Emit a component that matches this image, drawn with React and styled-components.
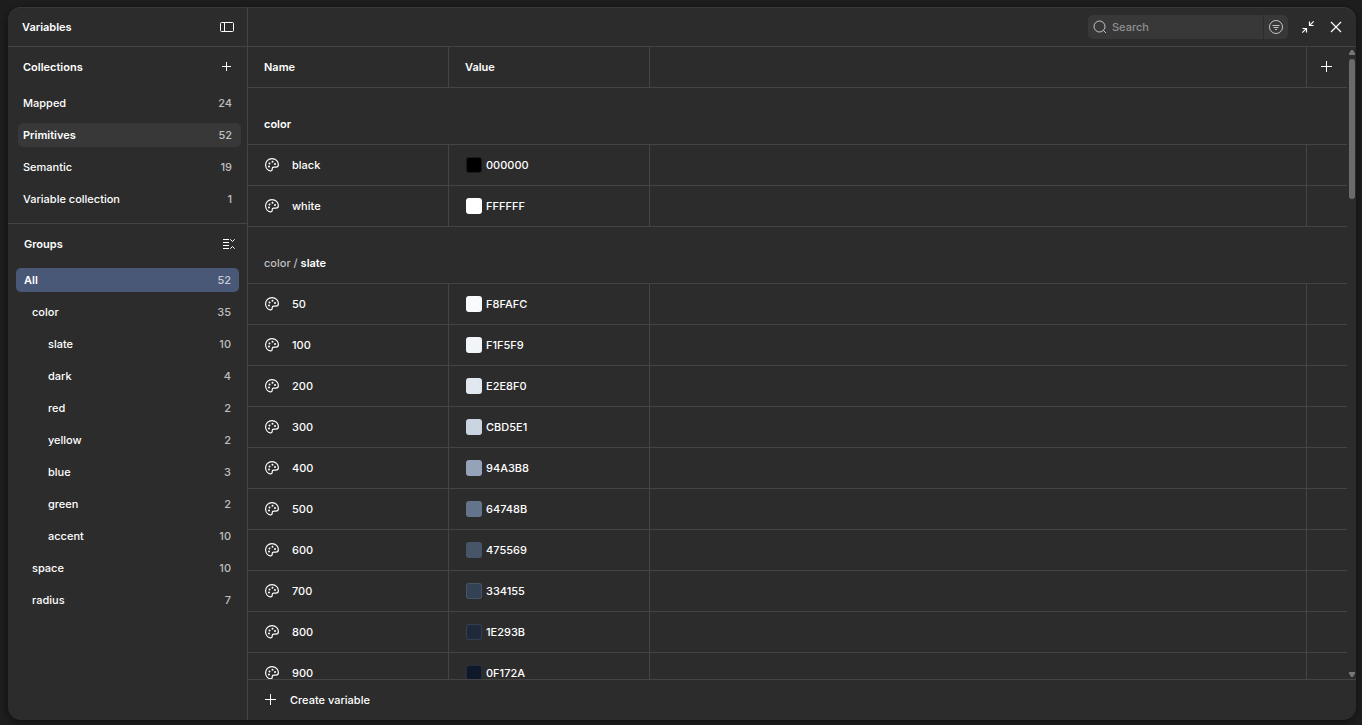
import React, { useState } from 'react';
import styled, { createGlobalStyle } from 'styled-components';

const collections = [
  { name: 'Mapped', count: 24 },
  { name: 'Primitives', count: 52 },
  { name: 'Semantic', count: 19 },
  { name: 'Variable collection', count: 1 },
];

const groups = [
  { name: 'All', count: 52, depth: 0 },
  { name: 'color', count: 35, depth: 1 },
  { name: 'slate', count: 10, depth: 2 },
  { name: 'dark', count: 4, depth: 2 },
  { name: 'red', count: 2, depth: 2 },
  { name: 'yellow', count: 2, depth: 2 },
  { name: 'blue', count: 3, depth: 2 },
  { name: 'green', count: 2, depth: 2 },
  { name: 'accent', count: 10, depth: 2 },
  { name: 'space', count: 10, depth: 1 },
  { name: 'radius', count: 7, depth: 1 },
];

const sections = [
  {
    name: 'color',
    variables: [
      ['black', '000000'],
      ['white', 'FFFFFF'],
    ],
  },
  {
    parent: 'color / ',
    name: 'slate',
    variables: [
      ['50', 'F8FAFC'],
      ['100', 'F1F5F9'],
      ['200', 'E2E8F0'],
      ['300', 'CBD5E1'],
      ['400', '94A3B8'],
      ['500', '64748B'],
      ['600', '475569'],
      ['700', '334155'],
      ['800', '1E293B'],
      ['900', '0F172A'],
    ],
  },
];

// dark swatches get an outline so they stay visible on the panel
const isDark = (hex) => parseInt(hex.slice(0, 2), 16) < 64;

const Icon = ({ children }) => (
  <svg width="16" height="16" viewBox="0 0 16 16" fill="none" stroke="currentColor" aria-hidden="true">
    {children}
  </svg>
);

const PanelIcon = () => (
  <Icon>
    <rect x="1.5" y="3.5" width="13" height="9" rx="1" />
    <path d="M5.5 3.5v9" />
  </Icon>
);

const SmallPlusIcon = () => (
  <Icon>
    <path d="M7.5 3v9M3 7.5h9" />
  </Icon>
);

const PlusIcon = () => (
  <Icon>
    <path d="M7.5 2v11M2 7.5h11" />
  </Icon>
);

const CollapseGroupsIcon = () => (
  <Icon>
    <path d="M4 3.5h6M4 6.5h6M4 9.5h6M4 12.5h6" />
    <path d="M11.300 3.300l2.200 2.200 2.200-2.200M11.300 12.700l2.200-2.200 2.200 2.200" />
  </Icon>
);

const SearchIcon = () => (
  <Icon>
    <circle cx="7.5" cy="7.5" r="5.5" />
    <path d="M11.5 11.5l2.5 2.5" />
  </Icon>
);

const FilterIcon = () => (
  <Icon>
    <circle cx="8" cy="8" r="6.5" />
    <path d="M4.5 6.5h7M5.5 8.5h5M7 10.5h2" />
  </Icon>
);

const MinimizeIcon = () => (
  <Icon>
    <path strokeWidth="1.2" d="M13.700 2.300l-4 4M9.500 2.500v4h4M2.300 13.700l4-4M2.500 9.500h4v4" />
  </Icon>
);

const CloseIcon = () => (
  <Icon>
    <path strokeWidth="1.2" d="M3 3l10 10M13 3L3 13" />
  </Icon>
);

const PaletteIcon = () => (
  <Icon>
    <path
      strokeWidth="1.2"
      d="M8 1.600c-3.600 0-6.400 2.800-6.400 6.200 0 3.200 2.200 5.700 4.700 6 1.200.2 1.900-.5 1.900-1.500v-.7c0-.9.600-1.500 1.500-1.500h2.200c1.500 0 2.500-.9 2.500-2.400C14.400 4.300 11.600 1.600 8 1.600z"
    />
    <g fill="currentColor" stroke="none">
      <circle cx="5" cy="9.500" r="1" />
      <circle cx="5.500" cy="6.500" r="1" />
      <circle cx="8.500" cy="4.800" r="1" />
      <circle cx="11" cy="7" r="1" />
    </g>
  </Icon>
);

const ScrollUpArrow = () => (
  <svg width="6" height="5" viewBox="0 0 6 5" fill="#767676">
    <path d="M0 5V3.500L2.200 0h1.600L6 3.500V5z" />
  </svg>
);

const ScrollDownArrow = () => (
  <svg width="6" height="5" viewBox="0 0 6 5" fill="#767676">
    <path d="M0 0v1.500L2.200 5h1.600L6 1.500V0z" />
  </svg>
);

const App = () => {
  const [collection, setCollection] = useState('Primitives');
  const [group, setGroup] = useState('All');

  return (
    <Page>
      <GlobalStyle />
      <Dialog>
        <Sidebar>
          <SidebarHeader>
            <Title>Variables</Title>
            <IconButton aria-label="Toggle sidebar"><PanelIcon /></IconButton>
          </SidebarHeader>
          <Collections>
            <SectionHeader>
              <SectionTitle>Collections</SectionTitle>
              <IconButton aria-label="Add collection"><SmallPlusIcon /></IconButton>
            </SectionHeader>
            <List>
              {collections.map(({ name, count }) => (
                <li key={name}>
                  <CollectionItem $active={name === collection} onClick={() => setCollection(name)}>
                    {name}
                    <Count>{count}</Count>
                  </CollectionItem>
                </li>
              ))}
            </List>
          </Collections>
          <Groups>
            <SectionHeader>
              <SectionTitle>Groups</SectionTitle>
              <IconButton aria-label="Collapse groups"><CollapseGroupsIcon /></IconButton>
            </SectionHeader>
            <List>
              {groups.map(({ name, count, depth }) => (
                <li key={name}>
                  <GroupItem $depth={depth} $active={name === group} onClick={() => setGroup(name)}>
                    {name}
                    <Count>{count}</Count>
                  </GroupItem>
                </li>
              ))}
            </List>
          </Groups>
        </Sidebar>
        <Main>
          <Toolbar>
            <SearchBox>
              <SearchLabel>
                <SearchIcon />
                <SearchInput type="text" placeholder="Search" aria-label="Search" />
              </SearchLabel>
              <FilterButton aria-label="Filter"><FilterIcon /></FilterButton>
            </SearchBox>
            <IconButton aria-label="Minimize"><MinimizeIcon /></IconButton>
            <IconButton aria-label="Close"><CloseIcon /></IconButton>
          </Toolbar>
          <Content>
            <Scroller>
              <Table>
                <colgroup>
                  <Column $width={201} />
                  <Column $width={201} />
                  <Column />
                  <Column $width={40} />
                </colgroup>
                <thead>
                  <tr>
                    <HeadCell scope="col">Name</HeadCell>
                    <HeadCell scope="col">Value</HeadCell>
                    <Cell />
                    <Cell>
                      <IconButton aria-label="Add mode"><PlusIcon /></IconButton>
                    </Cell>
                  </tr>
                </thead>
                {sections.map(({ parent, name, variables }) => (
                  <tbody key={name}>
                    <tr>
                      <GroupCell colSpan={4} scope="rowgroup">
                        {parent && <Parent>{parent}</Parent>}
                        {name}
                      </GroupCell>
                    </tr>
                    {variables.map(([label, hex]) => (
                      <tr key={label}>
                        <Cell>
                          <NameField>
                            <PaletteIcon />
                            {label}
                          </NameField>
                        </Cell>
                        <Cell>
                          <ValueField>
                            <Swatch $hex={hex} />
                            {hex}
                          </ValueField>
                        </Cell>
                        <Cell />
                        <Cell />
                      </tr>
                    ))}
                  </tbody>
                ))}
              </Table>
            </Scroller>
            <Scrollbar aria-hidden="true">
              <ScrollUpArrow />
              <Thumb />
              <ScrollDownArrow />
            </Scrollbar>
          </Content>
          <Footer>
            <CreateButton>
              <PlusIcon />
              Create variable
            </CreateButton>
          </Footer>
        </Main>
      </Dialog>
    </Page>
  );
};

const GlobalStyle = createGlobalStyle`
  * {
    box-sizing: border-box;
  }
  body {
    margin: 0;
    background: #1e1e1e;
    color: #fff;
    font: 500 11px/16px Inter, "Liberation Sans", sans-serif;
  }
  button, input {
    padding: 0;
    border: none;
    background: none;
    color: inherit;
    font: inherit;
  }
  button {
    cursor: pointer;
  }
  svg {
    display: block;
    flex: none;
  }
`;

const Page = styled.div`
  display: flex;
  height: 100vh;
  padding: 7px 6px 5px 8px;
`;

const Dialog = styled.div`
  display: flex;
  flex: 1;
  min-width: 0;
  overflow: hidden;
  background: #2c2c2c;
  border-radius: 13px;
  box-shadow: 0 2px 10px rgba(0, 0, 0, 0.5), inset 0 1px #383838;
`;

const Sidebar = styled.aside`
  display: flex;
  flex-direction: column;
  width: 240px;
  flex: none;
  border-right: 1px solid #444;
`;

const SidebarHeader = styled.header`
  display: flex;
  align-items: center;
  justify-content: space-between;
  height: 40px;
  padding: 0 8px 0 14px;
  border-bottom: 1px solid #444;
`;

const Title = styled.h1`
  margin: 0;
  font-size: 11px;
  font-weight: 600;
`;

const IconButton = styled.button`
  display: grid;
  place-items: center;
  width: 24px;
  height: 24px;
  flex: none;
  border-radius: 5px;
`;

const SectionHeader = styled.div`
  display: flex;
  align-items: center;
  justify-content: space-between;
  height: 40px;
`;

const SectionTitle = styled.h2`
  margin: 0;
  font-size: 11px;
  font-weight: 600;
`;

const List = styled.ul`
  display: flex;
  flex-direction: column;
  gap: 8px;
  margin: 0;
  padding: 0;
  list-style: none;
`;

const Collections = styled.section`
  padding: 0 6px 12px 10px;
  border-bottom: 1px solid #444;

  ${SectionHeader} {
    margin-bottom: 4px;
    padding: 0 2px 0 5px;
  }
`;

const Groups = styled.section`
  flex: 1;
  padding: 0 8px;

  ${SectionHeader} {
    margin-bottom: 4px;
    padding-left: 8px;
  }
`;

const Item = styled.button`
  display: flex;
  align-items: center;
  justify-content: space-between;
  width: 100%;
  height: 24px;
  border-radius: 5px;
  font-weight: ${({ $active }) => ($active ? 600 : 500)};
  text-align: left;
`;

const CollectionItem = styled(Item)`
  padding: 0 9px 0 5px;
  background: ${({ $active }) => ($active ? '#383838' : 'transparent')};
`;

const GroupItem = styled(Item)`
  padding: 0 8px;
  padding-left: ${({ $depth }) => [8, 16, 32][$depth]}px;
  background: ${({ $active }) => ($active ? '#4a5878' : 'transparent')};
`;

const Count = styled.span`
  color: rgba(255, 255, 255, 0.7);
  font-weight: 500;
`;

const Main = styled.main`
  display: flex;
  flex-direction: column;
  flex: 1;
  min-width: 0;
`;

const Toolbar = styled.div`
  display: flex;
  align-items: center;
  justify-content: flex-end;
  gap: 4px;
  height: 40px;
  flex: none;
  padding-right: 8px;
  border-bottom: 1px solid #444;
`;

const SearchBox = styled.div`
  display: flex;
  gap: 1px;
  height: 24px;
  margin-right: 4px;
  overflow: hidden;
  border-radius: 5px;
  color: rgba(255, 255, 255, 0.7);
`;

const SearchLabel = styled.label`
  display: flex;
  align-items: center;
  gap: 4px;
  width: 175px;
  padding-left: 4px;
  background: #383838;
`;

const SearchInput = styled.input`
  width: 100%;
  min-width: 0;
  outline: none;
  color: #fff;

  &::placeholder {
    color: rgba(255, 255, 255, 0.45);
    opacity: 1;
  }
`;

const FilterButton = styled.button`
  display: grid;
  place-items: center;
  width: 24px;
  background: #383838;
`;

const Content = styled.div`
  display: flex;
  flex: 1;
  min-height: 0;
`;

const Scroller = styled.div`
  flex: 1;
  min-width: 0;
  overflow-y: auto;
  scrollbar-width: none;
`;

const Table = styled.table`
  width: 100%;
  table-layout: fixed;
  border-spacing: 0;
`;

const Column = styled.col`
  width: ${({ $width }) => ($width ? `${$width}px` : 'auto')};
`;

const Cell = styled.td`
  height: 41px;
  padding: 0 16px;
  border-right: 1px solid #444;
  border-bottom: 1px solid #444;

  &:last-child {
    padding: 0 8px;
    border-right: none;
  }
`;

const HeadCell = styled(Cell).attrs({ as: 'th' })`
  font-weight: 600;
  text-align: left;
`;

const GroupCell = styled.th`
  height: 57px;
  padding: 16px 16px 0;
  border-bottom: 1px solid #444;
  font-weight: 600;
  text-align: left;
`;

const Parent = styled.span`
  color: rgba(255, 255, 255, 0.7);
  font-weight: 500;
`;

const NameField = styled.div`
  display: flex;
  align-items: center;
  gap: 12px;
`;

const ValueField = styled.div`
  display: flex;
  align-items: center;
  gap: 4px;
  padding-left: 1px;
`;

const Swatch = styled.span`
  width: 16px;
  height: 16px;
  border: ${({ $hex }) => (isDark($hex) ? '1px solid rgba(255, 255, 255, 0.1)' : 'none')};
  border-radius: 3px;
  background: ${({ $hex }) => `#${$hex}`};
`;

const Scrollbar = styled.div`
  display: flex;
  flex-direction: column;
  align-items: center;
  justify-content: space-between;
  width: 9px;
  flex: none;
  padding: 3px 0 2px 1px;
`;

const Thumb = styled.span`
  width: 6px;
  height: 140px;
  margin: 4px 0 auto;
  border-radius: 3px;
  background: #6b6b6b;
`;

const Footer = styled.footer`
  display: flex;
  align-items: center;
  height: 41px;
  flex: none;
  padding: 0 15px;
  border-top: 1px solid #444;
`;

const CreateButton = styled.button`
  display: flex;
  align-items: center;
  gap: 11px;
  height: 24px;
`;

export default App;
